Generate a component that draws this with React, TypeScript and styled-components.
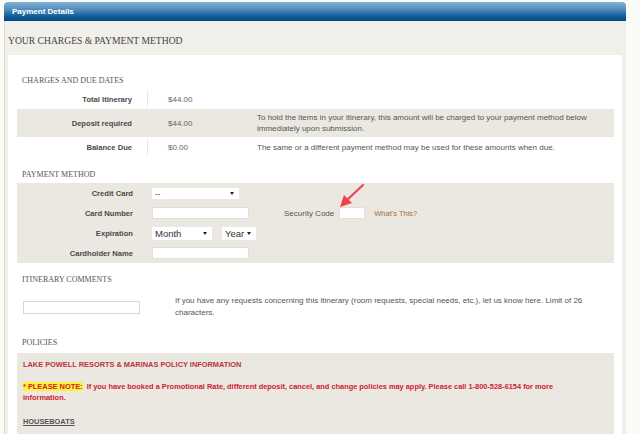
import styled, { createGlobalStyle } from 'styled-components';

// Charges table rows
const charges = [
  { label: 'Total Itinerary', amount: '$44.00', note: '', shaded: false },
  {
    label: 'Deposit required',
    amount: '$44.00',
    note: 'To hold the items in your itinerary, this amount will be charged to your payment method below immediately upon submission.',
    shaded: true,
  },
  {
    label: 'Balance Due',
    amount: '$0.00',
    note: 'The same or a different payment method may be used for these amounts when due.',
    shaded: false,
  },
];

function App() {
  return (
    <Page>
      <GlobalStyle />
      <Wrapper>
        <Header>Payment Details</Header>
        <Panel>
          <PageTitle>YOUR CHARGES &amp; PAYMENT METHOD</PageTitle>
          <Inner>
            <SectionTitle>CHARGES AND DUE DATES</SectionTitle>
            {charges.map((c) => (
              <ChargeRow key={c.label} $shaded={c.shaded}>
                <Label>{c.label}</Label>
                <Amount>{c.amount}</Amount>
                <Note>{c.note}</Note>
              </ChargeRow>
            ))}

            <SectionTitle $top={12} $bottom={2}>PAYMENT METHOD</SectionTitle>
            <FormBlock>
              <FormRow>
                <Label>Credit Card</Label>
                <Field>
                  <SelectBox $width={87}>
                    <Select defaultValue="--">
                      <option>--</option>
                    </Select>
                    <Caret />
                  </SelectBox>
                </Field>
              </FormRow>
              <FormRow>
                <Label>Card Number</Label>
                <Field>
                  <TextInput $width={97} />
                  <SecurityLabel>Security Code</SecurityLabel>
                  <CodeWrap>
                    <TextInput $width={26} />
                    <Arrow width="28" height="28" viewBox="0 0 28 28">
                      <line x1="25" y1="2" x2="9" y2="17" stroke="#f0404e" strokeWidth="2.2" strokeLinecap="round" />
                      <polygon points="2,24 6,12 14,20" fill="#f0404e" />
                    </Arrow>
                  </CodeWrap>
                  <WhatsThis>What's This?</WhatsThis>
                </Field>
              </FormRow>
              <FormRow>
                <Label>Expiration</Label>
                <Field>
                  <SelectBox $width={60} $big>
                    <Select defaultValue="Month">
                      <option>Month</option>
                    </Select>
                    <Caret />
                  </SelectBox>
                  <SelectBox $width={34} $big $gap={10}>
                    <Select defaultValue="Year">
                      <option>Year</option>
                    </Select>
                    <Caret />
                  </SelectBox>
                </Field>
              </FormRow>
              <FormRow>
                <Label>Cardholder Name</Label>
                <Field>
                  <TextInput $width={97} />
                </Field>
              </FormRow>
            </FormBlock>

            <SectionTitle $top={11} $bottom={0}>ITINERARY COMMENTS</SectionTitle>
            <CommentRow>
              <CommentInput />
              <CommentText>
                If you have any requests concerning this itinerary (room requests, special needs, etc.), let us know here. Limit of 26 characters.
              </CommentText>
            </CommentRow>

            <SectionTitle $top={18} $bottom={4}>POLICIES</SectionTitle>
            <PolicyBlock>
              <PolicyTitle>LAKE POWELL RESORTS &amp; MARINAS POLICY INFORMATION</PolicyTitle>
              <PolicyNote>
                <Highlight>* PLEASE NOTE:</Highlight>&nbsp; If you have booked a Promotional Rate, different deposit, cancel, and change policies may apply. Please call 1-800-528-6154 for more information.
              </PolicyNote>
              <SubHeading>HOUSEBOATS</SubHeading>
            </PolicyBlock>
          </Inner>
        </Panel>
      </Wrapper>
    </Page>
  );
}

// Global Styles
const GlobalStyle = createGlobalStyle`
  html, body {
    margin: 0;
    padding: 0;
    background: #fafaf7;
    font-family: "Liberation Sans", Arial, sans-serif;
  }
`;

// Elements Styles

const Page = styled.div`
  width: 640px;
  height: 434px;
  overflow: hidden;
  padding-top: 2px;
  box-sizing: border-box;
`;

const Wrapper = styled.div`
  width: 622px;
  margin-left: 4px;
`;

const Header = styled.div`
  height: 19px;
  line-height: 19px;
  padding-left: 8px;
  border-radius: 4px 4px 0 0;
  background: linear-gradient(#86b2d6 0%, #4f8bbd 40%, #0d5896 78%, #074b85 100%);
  color: #fff;
  font-size: 8px;
  font-weight: bold;
`;

const Panel = styled.div`
  background: #f1efe9;
  border-left: 1px solid #dedbd3;
  height: 420px;
`;

const PageTitle = styled.div`
  padding: 14px 3px 8px;
  font-family: "Liberation Serif", "Times New Roman", serif;
  font-size: 9.6px;
  line-height: 12px;
  color: #444;
`;

const Inner = styled.div`
  margin: 0 4px 0 3px;
  padding: 0 8px 0 9px;
  background: #fff;
  height: 400px;
`;

const SectionTitle = styled.div<{ $top?: number; $bottom?: number }>`
  padding: ${(p) => p.$top ?? 20}px 5px ${(p) => p.$bottom ?? 3}px;
  font-family: "Liberation Serif", "Times New Roman", serif;
  font-size: 8px;
  line-height: 12px;
  color: #5b524a;
`;

const ChargeRow = styled.div<{ $shaded: boolean }>`
  display: grid;
  grid-template-columns: 131px 109px 1fr;
  align-items: stretch;
  margin-bottom: 1px;
  background: ${(p) => (p.$shaded ? '#ebe8e1' : 'transparent')};
  font-size: 8px;
`;

const Label = styled.div`
  display: flex;
  align-items: center;
  justify-content: flex-end;
  padding-right: 15px;
  font-size: 7.6px;
  font-weight: bold;
  color: #4a4a4a;
  border-right: 1px solid #ece9e3;
`;

const Amount = styled.div`
  display: flex;
  align-items: center;
  padding-left: 20px;
  color: #666;
`;

const Note = styled.div`
  padding: 3px 8px 3px 0;
  min-height: 12px;
  line-height: 11px;
  color: #555;
  display: flex;
  align-items: center;
`;

const FormBlock = styled.div`
  background: #ebe8e1;
`;

const FormRow = styled.div`
  display: grid;
  grid-template-columns: 131px 1fr;
  height: 20px;

  ${Label} {
    border-right: none;
  }
`;

const Field = styled.div`
  display: flex;
  align-items: center;
  padding-left: 4px;
  font-size: 8px;
`;

const SelectBox = styled.div<{ $width: number; $big?: boolean; $gap?: number }>`
  display: flex;
  align-items: center;
  width: ${(p) => p.$width}px;
  height: ${(p) => (p.$big ? 13 : 11)}px;
  margin-left: ${(p) => p.$gap ?? 0}px;
  background: #fff;
  box-sizing: border-box;
  padding: 0 5px 0 3px;

  select {
    font-size: ${(p) => (p.$big ? 9.5 : 8)}px;
  }
`;

const Select = styled.select`
  appearance: none;
  flex: 1;
  min-width: 0;
  border: none;
  background: transparent;
  padding: 0;
  margin: 0;
  font-family: "Liberation Sans", Arial, sans-serif;
  color: #333;
  outline: none;
`;

const Caret = styled.span`
  width: 0;
  height: 0;
  border-left: 2.5px solid transparent;
  border-right: 2.5px solid transparent;
  border-top: 3px solid #222;
`;

const TextInput = styled.input<{ $width: number }>`
  width: ${(p) => p.$width}px;
  height: 12px;
  box-sizing: border-box;
  border: 1px solid #e2dfd8;
  background: #fff;
  padding: 0;
  margin: 0;
`;

const SecurityLabel = styled.span`
  margin-left: 35px;
  margin-right: 5px;
  color: #555;
`;

const CodeWrap = styled.span`
  position: relative;
  display: inline-flex;
`;

const Arrow = styled.svg`
  position: absolute;
  left: -1px;
  top: -24px;
`;

const WhatsThis = styled.span`
  margin-left: 9px;
  color: #a0713f;
  font-size: 7.5px;
`;

const CommentRow = styled.div`
  display: flex;
  align-items: flex-start;
  padding: 9px 0 0 6px;
`;

const CommentInput = styled.input`
  width: 117px;
  height: 13px;
  box-sizing: border-box;
  margin: 6px 0 0;
  padding: 0;
  border: 1px solid #d8d6d0;
  background: #fff;
`;

const CommentText = styled.div`
  margin-left: 35px;
  width: 410px;
  font-size: 8px;
  line-height: 12px;
  color: #555;
`;

const PolicyBlock = styled.div`
  background: #ebe8e1;
  padding: 6px 8px 10px 6px;
  height: 100px;
`;

const PolicyTitle = styled.div`
  font-size: 7.4px;
  line-height: 12px;
  font-weight: bold;
  color: #b8343c;
`;

const PolicyNote = styled.div`
  margin-top: 10px;
  width: 545px;
  font-size: 7.4px;
  line-height: 11px;
  font-weight: bold;
  color: #d0202c;
`;

const Highlight = styled.span`
  background: #fff23a;
`;

const SubHeading = styled.div`
  margin-top: 13px;
  font-size: 7.4px;
  line-height: 12px;
  font-weight: bold;
  color: #555;
  text-decoration: underline;
`;

export default App;
